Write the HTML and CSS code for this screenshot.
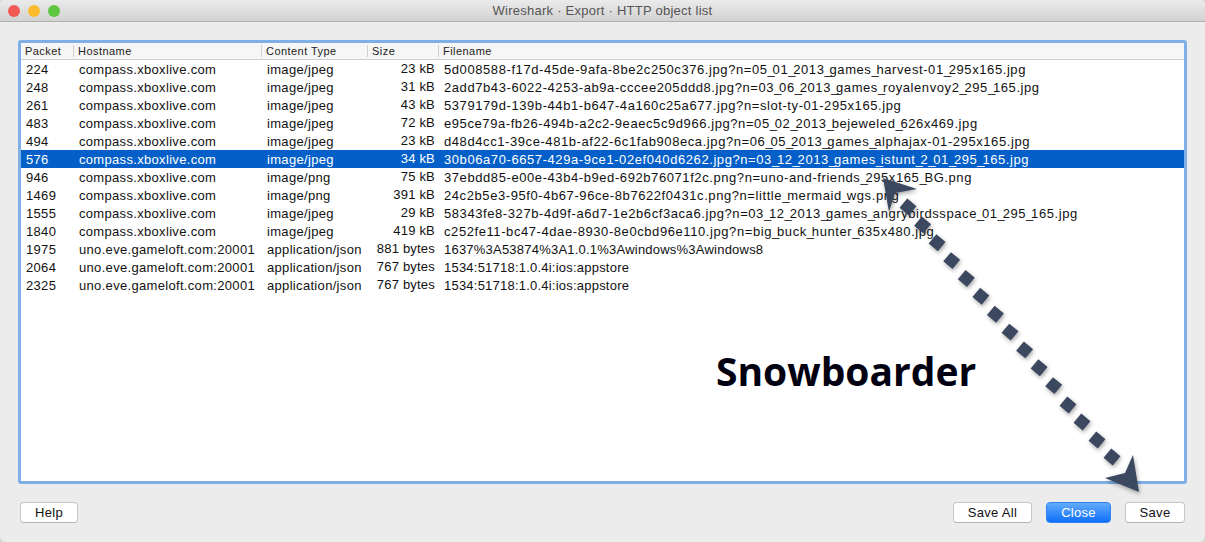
FILE: index.html
```html
<!DOCTYPE html>
<html>
	<head>
		<title>Wireshark · Export · HTTP object list</title>
		<link rel="stylesheet" href="styles.css">
	</head>
	<body>
		<div class="window">
			<div class="titlebar">
				<div class="lights">
					<span class="light red"></span>
					<span class="light yellow"></span>
					<span class="light green"></span>
				</div>
				<div class="title">Wireshark · Export · HTTP object list</div>
			</div>
			<div class="content">
				<div class="frame">
					<table class="objects">
						<colgroup>
							<col class="c-packet">
							<col class="c-host">
							<col class="c-type">
							<col class="c-size">
							<col>
						</colgroup>
						<thead>
							<tr>
								<th>Packet</th>
								<th>Hostname</th>
								<th>Content Type</th>
								<th>Size</th>
								<th class="last">Filename</th>
							</tr>
						</thead>
						<tbody>
							<tr><td>224</td><td>compass.xboxlive.com</td><td>image/jpeg</td><td class="size">23 kB</td><td class="file">5d008588-f17d-45de-9afa-8be2c250c376.jpg?n=05<i>_</i>01<i>_</i>2013<i>_</i>games<i>_</i>harvest-01<i>_</i>295x165.jpg</td></tr>
							<tr><td>248</td><td>compass.xboxlive.com</td><td>image/jpeg</td><td class="size">31 kB</td><td class="file">2add7b43-6022-4253-ab9a-cccee205ddd8.jpg?n=03<i>_</i>06<i>_</i>2013<i>_</i>games<i>_</i>royalenvoy2<i>_</i>295<i>_</i>165.jpg</td></tr>
							<tr><td>261</td><td>compass.xboxlive.com</td><td>image/jpeg</td><td class="size">43 kB</td><td class="file">5379179d-139b-44b1-b647-4a160c25a677.jpg?n=slot-ty-01-295x165.jpg</td></tr>
							<tr><td>483</td><td>compass.xboxlive.com</td><td>image/jpeg</td><td class="size">72 kB</td><td class="file">e95ce79a-fb26-494b-a2c2-9eaec5c9d966.jpg?n=05<i>_</i>02<i>_</i>2013<i>_</i>bejeweled<i>_</i>626x469.jpg</td></tr>
							<tr><td>494</td><td>compass.xboxlive.com</td><td>image/jpeg</td><td class="size">23 kB</td><td class="file">d48d4cc1-39ce-481b-af22-6c1fab908eca.jpg?n=06<i>_</i>05<i>_</i>2013<i>_</i>games<i>_</i>alphajax-01-295x165.jpg</td></tr>
							<tr class="selected"><td>576</td><td>compass.xboxlive.com</td><td>image/jpeg</td><td class="size">34 kB</td><td class="file">30b06a70-6657-429a-9ce1-02ef040d6262.jpg?n=03<i>_</i>12<i>_</i>2013<i>_</i>games<i>_</i>istunt<i>_</i>2<i>_</i>01<i>_</i>295<i>_</i>165.jpg</td></tr>
							<tr><td>946</td><td>compass.xboxlive.com</td><td>image/png</td><td class="size">75 kB</td><td class="file">37ebdd85-e00e-43b4-b9ed-692b76071f2c.png?n=uno-and-friends<i>_</i>295x165<i>_</i>BG.png</td></tr>
							<tr><td>1469</td><td>compass.xboxlive.com</td><td>image/png</td><td class="size">391 kB</td><td class="file">24c2b5e3-95f0-4b67-96ce-8b7622f0431c.png?n=little<i>_</i>mermaid<i>_</i>wgs.png</td></tr>
							<tr><td>1555</td><td>compass.xboxlive.com</td><td>image/jpeg</td><td class="size">29 kB</td><td class="file">58343fe8-327b-4d9f-a6d7-1e2b6cf3aca6.jpg?n=03<i>_</i>12<i>_</i>2013<i>_</i>games<i>_</i>angrybirdsspace<i>_</i>01<i>_</i>295<i>_</i>165.jpg</td></tr>
							<tr><td>1840</td><td>compass.xboxlive.com</td><td>image/jpeg</td><td class="size">419 kB</td><td class="file">c252fe11-bc47-4dae-8930-8e0cbd96e110.jpg?n=big<i>_</i>buck<i>_</i>hunter<i>_</i>635x480.jpg</td></tr>
							<tr><td>1975</td><td>uno.eve.gameloft.com:20001</td><td>application/json</td><td class="size">881 bytes</td><td class="plain">1637%3A53874%3A1.0.1%3Awindows%3Awindows8</td></tr>
							<tr><td>2064</td><td>uno.eve.gameloft.com:20001</td><td>application/json</td><td class="size">767 bytes</td><td class="plain">1534:51718:1.0.4i:ios:appstore</td></tr>
							<tr><td>2325</td><td>uno.eve.gameloft.com:20001</td><td>application/json</td><td class="size">767 bytes</td><td class="plain">1534:51718:1.0.4i:ios:appstore</td></tr>
						</tbody>
					</table>
				</div>
				<div class="footer">
					<button class="btn help">Help</button>
					<div class="spacer"></div>
					<button class="btn save-all">Save All</button>
					<button class="btn close">Close</button>
					<button class="btn save">Save</button>
				</div>
			</div>
			<div class="label">Snowboarder</div>
			<svg class="arrow" width="1205" height="542" viewBox="0 0 1205 542">
				<g fill="#3b485f">
					<polygon points="883,178 917,189 895,193 889,212"/>
					<polygon points="1139,492 1133,455 1125,473 1105,478"/>
					<rect x="902" y="201" width="12" height="12" transform="rotate(40 908 207)"/>
					<rect x="916.6" y="218.9" width="12" height="12" transform="rotate(40 922.6 224.9)"/>
					<rect x="931.1" y="236.7" width="12" height="12" transform="rotate(40 937.1 242.7)"/>
					<rect x="945.7" y="254.6" width="12" height="12" transform="rotate(40 951.7 260.6)"/>
					<rect x="960.3" y="272.5" width="12" height="12" transform="rotate(40 966.3 278.5)"/>
					<rect x="974.9" y="290.3" width="12" height="12" transform="rotate(40 980.9 296.3)"/>
					<rect x="989.4" y="308.2" width="12" height="12" transform="rotate(40 995.4 314.2)"/>
					<rect x="1004" y="326.1" width="12" height="12" transform="rotate(40 1010 332.1)"/>
					<rect x="1018.6" y="343.9" width="12" height="12" transform="rotate(40 1024.6 349.9)"/>
					<rect x="1033.1" y="361.8" width="12" height="12" transform="rotate(40 1039.1 367.8)"/>
					<rect x="1047.7" y="379.6" width="12" height="12" transform="rotate(40 1053.7 385.6)"/>
					<rect x="1062" y="399" width="12" height="12" transform="rotate(40 1068 405)"/>
					<rect x="1076" y="416" width="12" height="12" transform="rotate(40 1082 422)"/>
					<rect x="1091" y="434" width="12" height="12" transform="rotate(40 1097 440)"/>
					<rect x="1106" y="451" width="12" height="12" transform="rotate(40 1112 457)"/>
				</g>
			</svg>
		</div>
	</body>
</html>
```
FILE: styles.css
```css
html, body {
	margin: 0;
	padding: 0;
	background: #d8d8d8;
}
.window {
	position: relative;
	width: 1205px;
	height: 542px;
	overflow: hidden;
	display: flex;
	flex-direction: column;
	background: #ececec;
	border-radius: 5px 5px 6px 6px;
	font-family: "Liberation Sans", Arial, sans-serif;
	font-size: 13px;
	color: #111;
}
.titlebar {
	position: relative;
	flex: none;
	height: 21px;
	display: flex;
	align-items: center;
	justify-content: center;
	background: linear-gradient(#ebebeb, #d2d2d2);
	border-bottom: 1px solid #b1b1b1;
}
.lights {
	position: absolute;
	left: 8px;
	top: 5px;
	display: flex;
	gap: 8px;
}
.light {
	width: 12px;
	height: 12px;
	border-radius: 50%;
}
.red { background: #f25b55; }
.yellow { background: #fdbb2e; }
.green { background: #5fc73f; }
.title {
	color: #555;
	letter-spacing: 0.25px;
}
.content {
	flex: 1;
	display: flex;
	flex-direction: column;
	padding: 18px 18px 0 18px;
}
.frame {
	height: 438px;
	border: 3px solid #7fafe6;
	border-radius: 3px;
	background: #fff;
}
.objects {
	width: 100%;
	table-layout: fixed;
	border-collapse: collapse;
}
.c-packet { width: 53px; }
.c-host { width: 188px; }
.c-type { width: 106px; }
.c-size { width: 71px; }
.objects th {
	height: 16px;
	padding: 0 0 0 4px;
	font-size: 11px;
	font-weight: normal;
	text-align: left;
	letter-spacing: 0.45px;
	color: #222;
	background: #f6f6f6;
	border-bottom: 1px solid #d0d0d0;
	background-image: linear-gradient(#cfcfcf, #cfcfcf);
	background-size: 1px 12px;
	background-position: right center;
	background-repeat: no-repeat;
}
.objects th.last {
	background-image: none;
}
.objects td {
	box-sizing: border-box;
	height: 18px;
	padding: 2px 0 0 5px;
	white-space: nowrap;
	overflow: hidden;
	letter-spacing: 0.32px;
}
.objects td.size {
	padding: 0 4px 0 0;
	text-align: right;
	letter-spacing: 0.2px;
}
.objects td.file {
	letter-spacing: 0.58px;
}
.objects td.plain {
	letter-spacing: 0.22px;
}
/* underscores run narrow in the original font */
.file i {
	font-style: normal;
	letter-spacing: -2.2px;
}
.selected td {
	background: #0460c8;
	color: #fff;
}
.footer {
	display: flex;
	align-items: center;
	margin: 0 2px;
	padding-top: 18px;
}
.spacer {
	flex: 1;
}
.btn {
	height: 21px;
	padding: 0;
	margin: 0;
	border: 1px solid #c6c6c6;
	border-bottom-color: #b4b4b4;
	border-radius: 4px;
	background: #fff;
	font-family: "Liberation Sans", Arial, sans-serif;
	font-size: 13px;
	letter-spacing: 0.3px;
	color: #111;
}
.help { width: 58px; }
.save-all { width: 79px; }
.close {
	width: 65px;
	margin-left: 14px;
	border-color: #2f84f0;
	background: linear-gradient(#62abfb, #0f6ffa);
	color: #fff;
}
.save {
	width: 60px;
	margin-left: 14px;
}
.label {
	position: absolute;
	left: 716px;
	top: 346px;
	font-family: "Open Sans", sans-serif;
	font-size: 39px;
	font-weight: 700;
	line-height: 50px;
	color: #000010;
}
.arrow {
	position: absolute;
	left: 0;
	top: 0;
	filter: drop-shadow(1px 2px 2px rgba(0, 0, 0, 0.35));
}
```
